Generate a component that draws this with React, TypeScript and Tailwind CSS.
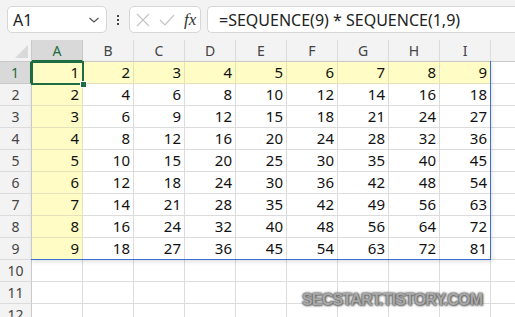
import React from "react";

const cols = ["A", "B", "C", "D", "E", "F", "G", "H", "I"];
const rows = Array.from({ length: 12 }, (_, i) => i + 1);

export default function App() {
  return (
    <div
      className="w-[515px] h-[317px] overflow-hidden bg-white relative"
      style={{ fontFamily: '"Noto Sans", "Open Sans", sans-serif' }}
    >
      {/* toolbar */}
      <div className="h-[40px] bg-[#f3f3f3] flex items-start pt-[6px]">
        <div className="ml-[7px] w-[100px] h-[27px] bg-white border border-[#d6d6d6] rounded-[5px] flex items-center pl-[5px] pr-[6px] shrink-0">
          <span className="text-[16px] text-[#222] flex-1 leading-none">A1</span>
          <svg width="12" height="8" viewBox="0 0 12 8">
            <path d="M1.5 2 L6 6 L10.5 2" stroke="#555" strokeWidth="1.3" fill="none" />
          </svg>
        </div>
        <div className="w-[22px] h-[27px] flex flex-col items-center justify-center gap-[2px] shrink-0">
          <div className="w-[2px] h-[2px] bg-[#444]" />
          <div className="w-[2px] h-[2px] bg-[#444]" />
          <div className="w-[2px] h-[2px] bg-[#444]" />
        </div>
        <div className="w-[72px] h-[27px] bg-white border border-[#d6d6d6] rounded-[5px] flex items-center shrink-0 pl-[5px]">
          <svg width="14" height="14" viewBox="0 0 14 14" className="ml-[1px]">
            <path d="M1 1 L13 13 M13 1 L1 13" stroke="#c4c4c4" strokeWidth="1.2" />
          </svg>
          <svg width="16" height="14" viewBox="0 0 16 14" className="ml-[9px]">
            <path d="M1 7 L6 12 L15 2" stroke="#c4c4c4" strokeWidth="1.2" fill="none" />
          </svg>
          <span
            className="ml-[9px] text-[17px] italic text-[#333] leading-none"
            style={{ fontFamily: '"Liberation Serif", "DejaVu Serif", serif' }}
          >
            fx
          </span>
        </div>
        <div className="ml-[6px] flex-1 h-[27px] bg-white border border-[#d6d6d6] border-r-0 rounded-l-[5px] flex items-center pl-[11px]">
          <span className="text-[16px] text-[#222] leading-none whitespace-nowrap">
            =SEQUENCE(9) * SEQUENCE(1,9)
          </span>
        </div>
      </div>

      {/* grid */}
      <div className="relative">
        <div className="grid grid-cols-[32px_repeat(9,51px)_1fr] auto-rows-[22px]">
          {/* header row */}
          <div className="bg-[#f3f3f3] border-r border-b border-[#c9c9c9] relative overflow-hidden">
            <div className="absolute right-[3px] bottom-[3px] w-0 h-0 border-l-[13px] border-l-transparent border-b-[13px] border-b-[#d9d9d9]" />
          </div>
          {cols.map((c, i) => (
            <div
              key={c}
              className={
                i === 0
                  ? "bg-[#d9d9d9] border-r border-[#c9c9c9] border-b-2 border-b-[#1e6c41] flex items-center justify-center text-[14px] text-[#1e6c41]"
                  : "bg-[#f3f3f3] border-r border-b border-[#dcdcdc] border-b-[#c9c9c9] flex items-center justify-center text-[14px] text-[#444]"
              }
            >
              {c}
            </div>
          ))}
          <div className="bg-[#f3f3f3] border-b border-[#c9c9c9]" />

          {rows.map((r) => (
            <React.Fragment key={r}>
              <div
                className={
                  r === 1
                    ? "bg-[#d9d9d9] border-r-2 border-r-[#1e6c41] border-b border-[#c9c9c9] flex items-center justify-center text-[14px] text-[#1e6c41]"
                    : "bg-[#f3f3f3] border-r border-b border-[#c9c9c9] border-b-[#dcdcdc] flex items-center justify-center text-[14px] text-[#444]"
                }
              >
                {r}
              </div>
              {cols.map((c, ci) => {
                const inRange = r <= 9;
                const yellow = inRange && (r === 1 || ci === 0);
                return (
                  <div
                    key={c}
                    className={
                      (yellow
                        ? "bg-[#fffdc5] border-[#e4e2bd] "
                        : "bg-white border-[#dcdcdc] ") +
                      "border-r border-b flex items-end justify-end pr-[3px] pb-[1px] text-[15px] leading-[20px] text-[#111]"
                    }
                  >
                    {inRange ? r * (ci + 1) : ""}
                  </div>
                );
              })}
              <div className="bg-white border-b border-[#dcdcdc]" />
            </React.Fragment>
          ))}
        </div>

        {/* spill range border */}
        <div className="absolute left-[31px] top-[21px] w-[460px] h-[199px] border-r border-b border-[#3b6fd1] shadow-[1px_2px_4px_rgba(0,0,0,0.12)] pointer-events-none" />

        {/* active cell */}
        <div className="absolute left-[31px] top-[21px] w-[53px] h-[24px] border-2 border-[#1e6c41] pointer-events-none" />
        <div className="absolute left-[80px] top-[41px] w-[7px] h-[7px] bg-[#1e6c41] border border-white pointer-events-none" />
      </div>

      {/* watermark */}
      <div
        className="absolute left-[302px] top-[292px] text-[16px] leading-[16px] font-bold text-[#a8a8a8] tracking-[-0.8px] pointer-events-none whitespace-nowrap"
        style={{
          fontFamily: '"Liberation Sans", Arial, sans-serif',
          textShadow:
            "0 0 1px #555, 0 0 2px #666, 0 0 3px #777, 1px 1px 2px rgba(0,0,0,0.5)",
        }}
      >
        SECSTART.TISTORY.COM
      </div>
    </div>
  );
}
